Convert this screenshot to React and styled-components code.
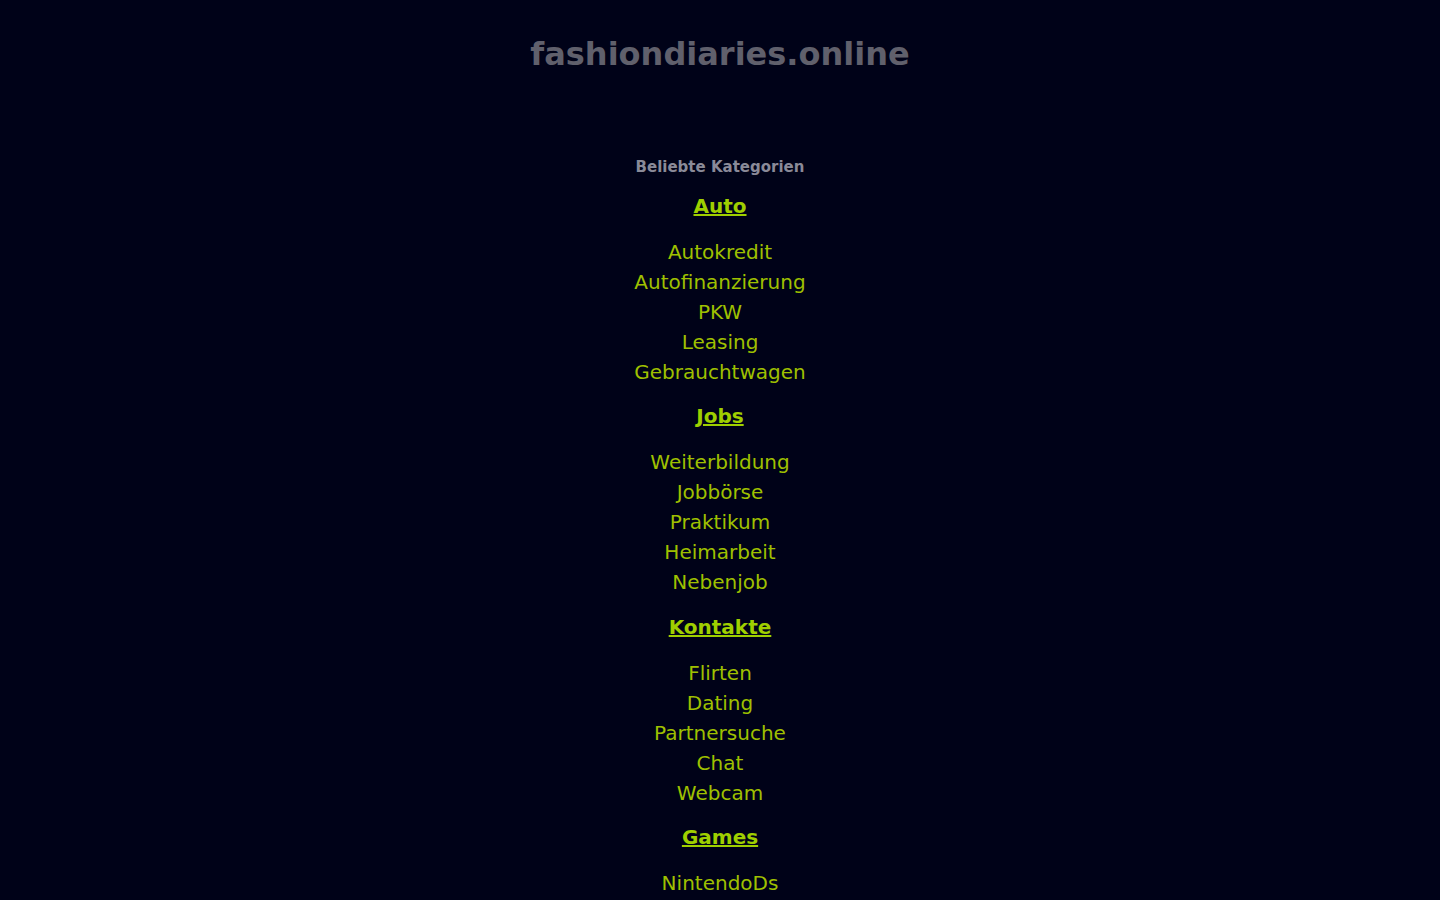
import React from 'react';
import styled, { createGlobalStyle } from 'styled-components';

const GlobalStyle = createGlobalStyle`
    html, body {
        margin: 0;
        padding: 0;
        background-color: #000218;
        font-family: "DejaVu Sans", Verdana, sans-serif;
    }
`;

const Page = styled.div`
    display: flex;
    flex-direction: column;
    align-items: center;
    text-align: center;
    height: 100vh;
    overflow: hidden;
`;

const Domain = styled.h1`
    margin: 34px 0 0;
    font-size: 32px;
    line-height: 40px;
    font-weight: bold;
    color: #60606c;
`;

const Intro = styled.h2`
    margin: 83px 0 0;
    font-size: 15px;
    line-height: 20px;
    font-weight: bold;
    color: #8a8a98;
`;

const Group = styled.div`
    display: flex;
    flex-direction: column;
    align-items: center;
    margin-top: 14.2px;
`;

const GroupTitle = styled.a`
    font-size: 20px;
    line-height: 30px;
    font-weight: bold;
    color: #9fcf00;
    text-decoration: underline;
    cursor: pointer;
    margin-bottom: 16px;
`;

const LinkItem = styled.a`
    font-size: 20px;
    line-height: 30px;
    color: #9fc000;
    text-decoration: none;
    cursor: pointer;
`;

const groups = [
    { title: 'Auto', links: ['Autokredit', 'Autofinanzierung', 'PKW', 'Leasing', 'Gebrauchtwagen'] },
    { title: 'Jobs', links: ['Weiterbildung', 'Jobbörse', 'Praktikum', 'Heimarbeit', 'Nebenjob'] },
    { title: 'Kontakte', links: ['Flirten', 'Dating', 'Partnersuche', 'Chat', 'Webcam'] },
    { title: 'Games', links: ['NintendoDs'] },
];

function App() {
    return (
        <>
            <GlobalStyle />
            <Page>
                <Domain>fashiondiaries.online</Domain>
                <Intro>Beliebte Kategorien</Intro>
                {groups.map(g => (
                    <Group key={g.title}>
                        <GroupTitle>{g.title}</GroupTitle>
                        {g.links.map(l => (
                            <LinkItem key={l}>{l}</LinkItem>
                        ))}
                    </Group>
                ))}
            </Page>
        </>
    );
}

export default App;
